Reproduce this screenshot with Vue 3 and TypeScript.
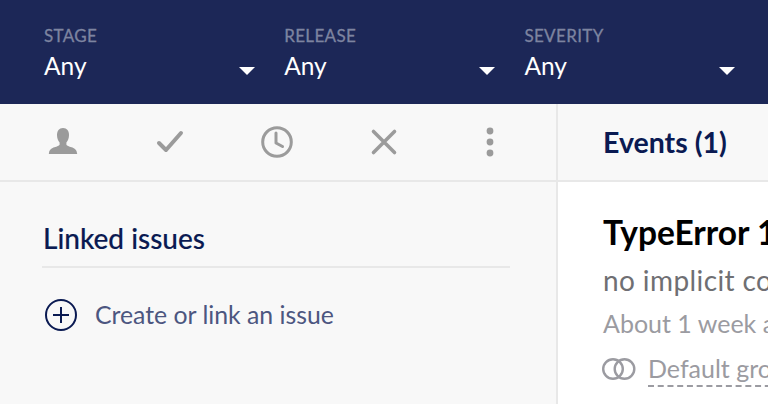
<script setup lang="ts">
const filters = ['STAGE', 'RELEASE', 'SEVERITY']
</script>

<template>
  <div class="page">
    <header class="filters">
      <div v-for="f in filters" :key="f" class="filter">
        <div class="filter-label">{{ f }}</div>
        <div class="filter-row">
          <span class="filter-value">Any</span>
          <span class="caret"></span>
        </div>
      </div>
    </header>
    <div class="columns">
      <aside class="side">
        <div class="toolbar">
          <button class="tool" aria-label="Assign">
            <svg width="32" height="32" viewBox="0 0 32 32"><path fill="#9b9b9b" d="M16 2c-4 0-6 3-6 7 0 3 1 6 2.600 7.500v2.300c-.6 1-2.400 1.700-5.200 2.500-2.400.8-4.800 1.800-5.400 5.700l-.2 1h28.400l-.2-1c-.6-3.900-3-4.900-5.400-5.700-2.800-.8-4.600-1.500-5.200-2.500v-2.300C21 15 22 12 22 9c0-4-2-7-6-7z"/></svg>
          </button>
          <button class="tool" aria-label="Resolve">
            <svg width="32" height="32" viewBox="0 0 32 32"><path fill="none" stroke="#9b9b9b" stroke-width="4" stroke-linecap="round" stroke-linejoin="round" d="M5 17l7 7L27 7"/></svg>
          </button>
          <button class="tool" aria-label="Snooze">
            <svg width="32" height="32" viewBox="0 0 32 32"><circle cx="16" cy="16" r="14.300" fill="none" stroke="#9b9b9b" stroke-width="3"/><path fill="none" stroke="#9b9b9b" stroke-width="3" stroke-linecap="round" stroke-linejoin="round" d="M15 7v10l6.500 3.500"/></svg>
          </button>
          <button class="tool" aria-label="Ignore">
            <svg width="32" height="32" viewBox="0 0 32 32"><path fill="none" stroke="#9b9b9b" stroke-width="3.600" stroke-linecap="round" d="M5.500 5.500l21 21M26.500 5.500l-21 21"/></svg>
          </button>
          <button class="tool" aria-label="More">
            <svg width="32" height="32" viewBox="0 0 32 32"><circle cx="16" cy="5" r="3.400" fill="#9b9b9b"/><circle cx="16" cy="16" r="3.400" fill="#9b9b9b"/><circle cx="16" cy="27" r="3.400" fill="#9b9b9b"/></svg>
          </button>
        </div>
        <div class="side-body">
          <h2 class="side-title">Linked issues</h2>
          <div class="link-row">
            <svg class="plus" width="34" height="34" viewBox="0 0 34 34"><circle cx="17" cy="17" r="15" fill="none" stroke="#0a1a52" stroke-width="2"/><path fill="none" stroke="#0a1a52" stroke-width="2" d="M17 9v16M9 17h16"/></svg>
            <span class="link-text">Create or link an issue</span>
          </div>
        </div>
      </aside>
      <main class="main">
        <div class="tabs"><span class="tab">Events (1)</span></div>
        <div class="event">
          <h1 class="event-title">TypeError 1</h1>
          <div class="event-msg">no implicit conversion</div>
          <div class="event-time">About 1 week ago</div>
          <div class="event-group">
            <svg class="rings" width="35" height="22" viewBox="0 0 35 22"><circle cx="11" cy="11" r="9.800" fill="none" stroke="#9b9ba1" stroke-width="2.400"/><circle cx="22.500" cy="11" r="9.800" fill="none" stroke="#9b9ba1" stroke-width="2.400"/></svg>
            <span class="group-text">Default group</span>
          </div>
        </div>
      </main>
    </div>
  </div>
</template>

<style>
html, body { margin: 0; background: #fff; }
</style>

<style scoped>
.page {
  width: 768px;
  height: 404px;
  overflow: hidden;
  font-family: "Lato", "Noto Sans", sans-serif;
  display: flex;
  flex-direction: column;
}
.filters {
  height: 104px;
  background: #1c2757;
  display: flex;
  padding-left: 44px;
  flex: none;
}
.filter { width: 212px; margin-right: 28.200px; padding-top: 26px; flex: none; }
.filter-label { font-size: 17px; line-height: 20px; color: #7d84a0; letter-spacing: .35px; -webkit-text-stroke: .3px #7d84a0; }
.filter-row { display: flex; justify-content: space-between; align-items: center; margin-top: 4px; }
.filter-value { font-size: 24.500px; line-height: 32px; color: #fff; }
.caret {
  width: 0; height: 0;
  border-left: 8.700px solid transparent;
  border-right: 8.700px solid transparent;
  border-top: 8px solid #fff;
  margin-top: 10px;
  margin-right: 1px;
}
.columns { flex: 1; display: flex; min-height: 0; }
.side {
  width: 556px;
  flex: none;
  background: #f8f8f8;
  border-right: 2px solid #e8e8e8;
}
.toolbar {
  height: 76px;
  border-bottom: 2px solid #e8e8e8;
  display: flex;
  align-items: center;
  padding-left: 10px;
}
.tool {
  width: 106.750px;
  flex: none;
  height: 32px;
  padding: 0;
  border: 0;
  background: none;
  display: flex;
  justify-content: center;
}
.side-body { padding: 38px 46px 0 42px; }
.side-title {
  margin: 0;
  font-size: 28px;
  line-height: 36px;
  font-weight: 500;
  color: #0a1a52;
  padding: 0 0 10px 1px;
  border-bottom: 2px solid #e8e8e8;
  -webkit-text-stroke: .15px #0a1a52;
}
.link-row { display: flex; align-items: center; gap: 17px; margin-top: 30px; padding-left: 2px; }
.plus { flex: none; }
.link-text { font-size: 24.800px; line-height: 34px; color: #4c5680; }
.main { flex: 1; min-width: 0; overflow: hidden; }
.tabs {
  height: 76px;
  background: #f8f8f8;
  border-bottom: 2px solid #e8e8e8;
  display: flex;
  align-items: center;
  padding-left: 45px;
}
.tab { font-size: 28.500px; font-weight: 700; color: #0a1a52; white-space: nowrap; }
.event { padding: 30px 0 0 45px; white-space: nowrap; }
.event-title { margin: 0; font-size: 33.500px; line-height: 40px; font-weight: 700; color: #000; }
.event-msg { font-size: 28px; line-height: 38px; letter-spacing: .4px; color: #6f6f73; margin-top: 9px; }
.event-time { font-size: 25px; line-height: 36px; color: #9b9ba1; margin-top: 6px; }
.event-group { display: flex; align-items: flex-start; gap: 11px; margin-top: 12px; }
.rings { flex: none; margin-top: 5px; margin-left: -1px; }
.group-text { font-size: 25px; line-height: 30px; padding-bottom: 2px; color: #9b9ba1; border-bottom: 2px dashed #9b9ba1; }
</style>
